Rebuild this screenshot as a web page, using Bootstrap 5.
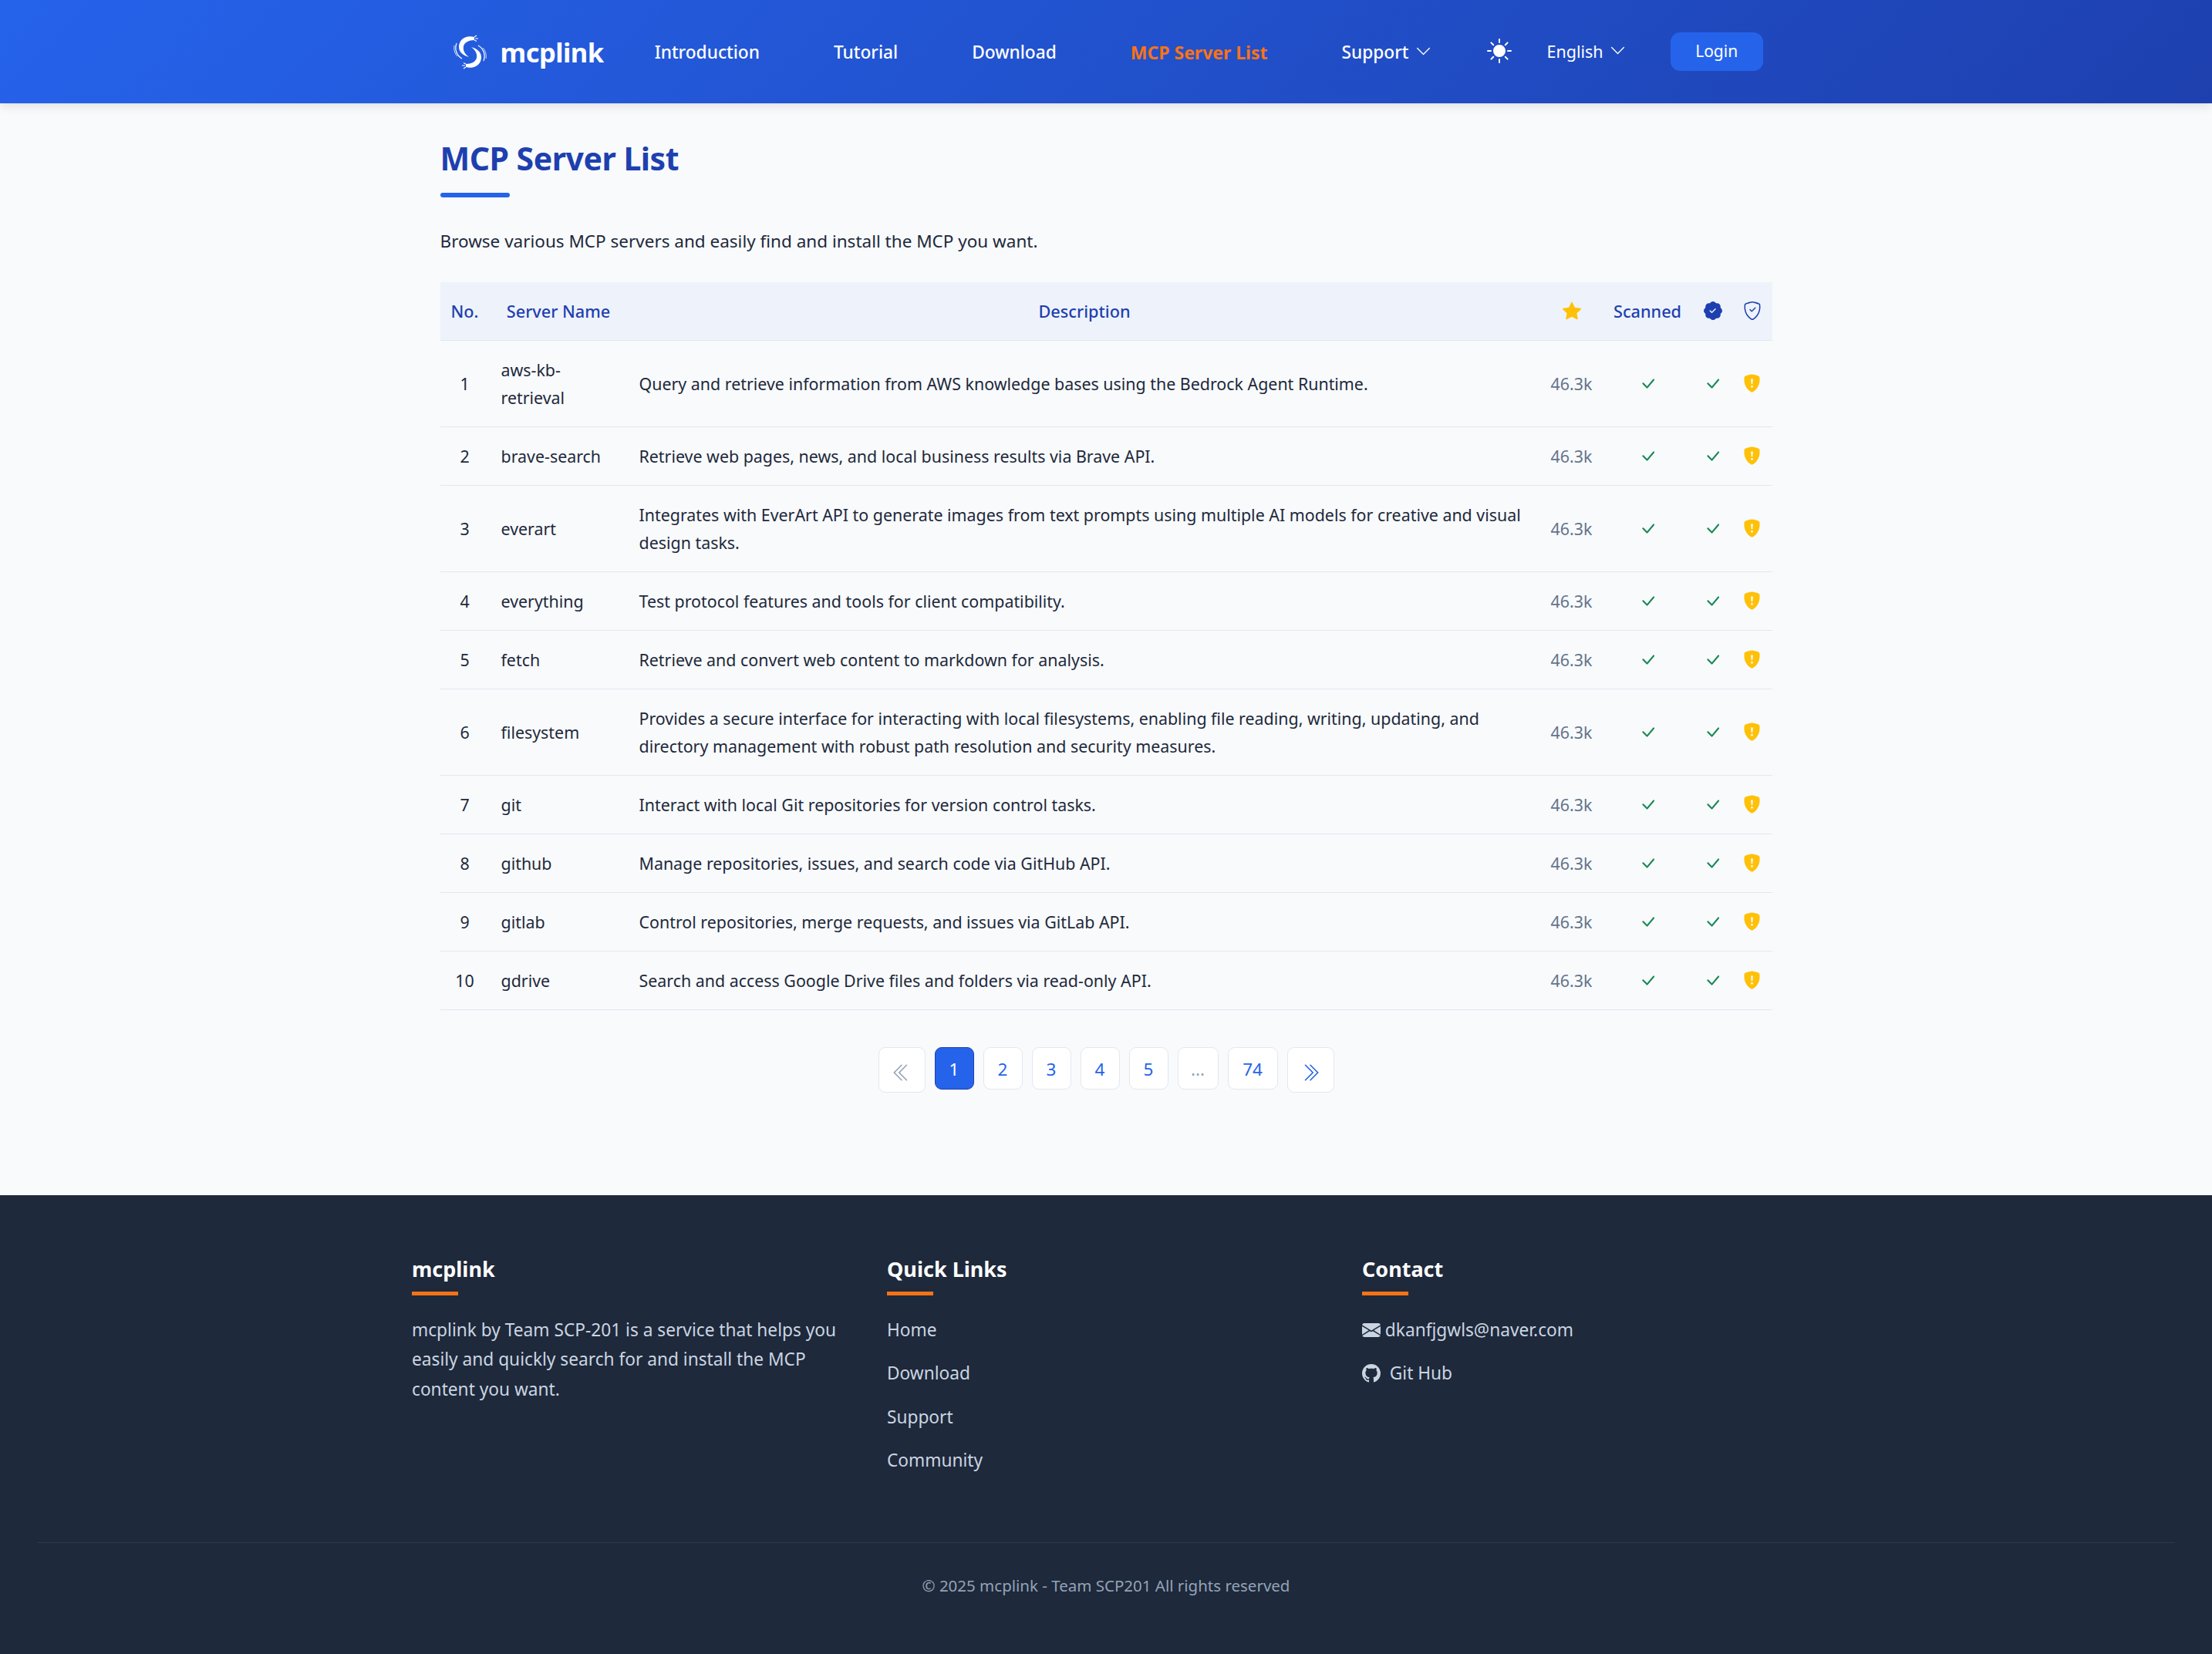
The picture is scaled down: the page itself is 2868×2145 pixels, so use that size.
<!DOCTYPE html>
<html lang="en">

<head>
    <meta charset="UTF-8" />
    <meta name="viewport" content="width=device-width, initial-scale=1.0" />
    <title>MCP Server List</title>
    <link href="https://cdn.jsdelivr.net/npm/bootstrap@5.3.2/dist/css/bootstrap.min.css" rel="stylesheet" />
    <style>
        body {
            background-color: #f8fafc;
            color: #1e293b;
            font-family: "Noto Sans", "Open Sans", sans-serif;
            font-size: 21.4px;
            line-height: 36px;
        }

        .top-bar {
            height: 134px;
            background: linear-gradient(135deg, #2563eb, #1e40af);
            box-shadow: 0 4px 12px rgba(0, 0, 0, .1);
        }

        .top-inner {
            width: 1727px;
            margin: 0 auto;
            height: 100%;
            padding-left: 17px;
        }

        .logo-mark { width: 43px; height: 47px; }
        .logo-text { color: #fff; font-size: 34.5px; font-weight: 700; margin-left: 18px; margin-right: 66px; letter-spacing: -.5px; padding-top: 2px; }
        .top-link { color: #fff; font-size: 22.7px; font-weight: 500; text-decoration: none; margin-right: 96px; white-space: nowrap; padding-top: 2px; }
        .top-link.current { color: #f97316; font-size: 23px; font-weight: 700; }
        .top-link svg, .lang-pick svg { width: 21px; height: 21px; margin-left: 8px; vertical-align: -1px; }
        .top-link.has-menu { margin-right: 72px; }
        .sun-btn { width: 32px; height: 32px; margin-right: 46px; margin-top: -2px; color: #fff; }
        .lang-pick { color: #fff; font-size: 21.5px; margin-right: 58px; margin-top: -1px; white-space: nowrap; }
        .login-btn {
            --bs-btn-bg: #2563eb;
            --bs-btn-color: #fff;
            --bs-btn-border-color: #2563eb;
            width: 120px;
            height: 50px;
            padding: 0;
            font-size: 21px;
            border-radius: 12px;
            margin-top: -1px;
        }

        .page-wrap { width: 1727px; margin: 0 auto; }

        .page-title { color: #1e40af; font-size: 41px; font-weight: 700; line-height: 60px; margin: 0; padding-top: 41px; letter-spacing: -.5px; }
        .title-bar { width: 90px; height: 6px; border-radius: 3px; background: #2563eb; margin-top: 15px; }
        .page-sub { margin: 38px 0 35px; font-size: 22.5px; line-height: 37px; }

        .server-table { table-layout: fixed; margin: 0; --bs-table-bg: transparent; --bs-table-color: #1e293b; }
        .server-table > :not(caption) > * > * { padding: 19.5px 15px; border-bottom: 1px solid #e2e8f0; vertical-align: middle; line-height: 36px; }
        .server-table thead th { background: #eef3fb; color: #1e40af; font-size: 21.7px; font-weight: 500; text-align: center; padding: 19px 0; line-height: 37px; white-space: nowrap; }
        .server-table td.num { text-align: center; padding-left: 0; padding-right: 0; }
        .server-table td.stars { text-align: center; color: #64748b; padding-left: 0; padding-right: 0; }
        .server-table td.mark-cell { text-align: center; padding-left: 0; padding-right: 0; }
        .server-table svg { vertical-align: -3px; }
        .tick { width: 23px; height: 23px; color: #198754; }
        .warn-shield { width: 23px; height: 24px; color: #ffc107; }
        .head-star { width: 24px; height: 24px; color: #ffc107; }
        .head-badge, .head-shield { width: 24px; height: 24px; color: #1e40af; }

        .pager { margin: 48px 0 133px; gap: 13px; align-items: flex-start; }
        .pager .page-link {
            display: flex;
            align-items: center;
            justify-content: center;
            height: 55px;
            min-width: 51px;
            padding: 3px 0 0;
            color: #2563eb;
            background: #fff;
            border: 1px solid #e2e8f0;
            border-radius: 9px !important;
            font-size: 22.5px;
            margin: 0;
        }
        .pager .active .page-link { background: #2563eb; border-color: #1e40af; color: #fff; }
        .pager .disabled .page-link { color: #94a3b8; }
        .pager .edge .page-link { width: 61px; height: 59px; }
        .pager .wide .page-link { width: 65px; }
        .pager .dots .page-link { width: 53px; }
        .pager svg { width: 26px; height: 26px; margin-top: 4px; }

        .site-foot { background: #1e293b; color: #cbd5e1; height: 595px; padding-top: 75px; }
        .foot-grid { width: 1848px; margin: 0 auto; --bs-gutter-x: 48px; }
        .foot-head { color: #fff; font-size: 27px; font-weight: 700; line-height: 42px; margin: 0; }
        .foot-rule { height: 5px; background: #f97316; margin: 8px 0 26px; }
        .rule-a { width: 60px; }
        .rule-b { width: 60px; }
        .foot-text { font-size: 22.7px; line-height: 38.4px; margin: 0; max-width: 570px; }
        .foot-links { list-style: none; margin: 0; padding: 0; }
        .foot-links li { height: 56.3px; line-height: 38px; font-size: 22.7px; }
        .foot-links a { color: #cbd5e1; text-decoration: none; }
        .foot-links svg { width: 24px; height: 24px; vertical-align: -4px; }
        .foot-line { border-top: 1px solid rgba(255, 255, 255, .07); margin: 0 48px; margin-top: 69px; padding-top: 36px; text-align: center; color: #94a3b8; font-size: 20.5px; line-height: 38px; }
    </style>
</head>

<body>
    <svg width="0" height="0" class="position-absolute">
        <symbol id="i-chev" viewBox="0 0 16 16"><path fill="currentColor" fill-rule="evenodd" d="M1.646 4.646a.5.5 0 0 1 .708 0L8 10.293l5.646-5.647a.5.5 0 0 1 .708.708l-6 6a.5.5 0 0 1-.708 0l-6-6a.5.5 0 0 1 0-.708z"/></symbol>
        <symbol id="i-check" viewBox="0 0 16 16"><path fill="currentColor" d="M12.736 3.97a.733.733 0 0 1 1.047 0c.286.289.29.756.01 1.05L7.88 12.01a.733.733 0 0 1-1.065.02L3.217 8.384a.757.757 0 0 1 0-1.06.733.733 0 0 1 1.047 0l3.052 3.093 5.4-6.425z"/></symbol>
        <symbol id="i-warn" viewBox="0 0 16 16"><path fill="currentColor" fill-rule="evenodd" d="M8 0c-.69 0-1.843.265-2.928.56-1.11.3-2.229.655-2.887.87a1.54 1.54 0 0 0-1.044 1.262c-.596 4.477.787 7.795 2.465 9.99a11.777 11.777 0 0 0 2.517 2.453c.386.273.744.482 1.048.625.28.132.581.24.829.24s.548-.108.829-.24a7.159 7.159 0 0 0 1.048-.625 11.775 11.775 0 0 0 2.517-2.453c1.678-2.195 3.061-5.513 2.465-9.99a1.541 1.541 0 0 0-1.044-1.263 62.467 62.467 0 0 0-2.887-.87C9.843.266 8.69 0 8 0zm-.55 8.502L7.1 4.995a.905.905 0 1 1 1.8 0l-.35 3.507a.552.552 0 0 1-1.1 0zM8.002 12a1 1 0 1 1 0-2 1 1 0 0 1 0 2z"/></symbol>
    </svg>

    <header class="top-bar">
        <nav class="top-inner d-flex align-items-center">
            <svg class="logo-mark" viewBox="0 0 43 47" fill="#fff">
                <g id="logo-arm">
                    <path d="M27 4C16 1 7 7 7 17c0 6 5 11 13 13-5-4-8-8-7-14 1-5 7-8 14-8z"/>
                    <path d="M4 12C1 20 4 28 11 32" fill="none" stroke="#fff" stroke-width="1.2"/>
                    <path d="M1 15C0 21 2 26 5 29" fill="none" stroke="#fff" stroke-width=".8"/>
                    <path d="M27 4l3-2M28 6h4M27 8l3 1.5" stroke="#fff" stroke-width="1.1"/>
                </g>
                <use href="#logo-arm" transform="rotate(180 21.5 23.5)"/>
            </svg>
            <span class="logo-text">mcplink</span>
            <a class="top-link" href="#">Introduction</a>
            <a class="top-link" href="#">Tutorial</a>
            <a class="top-link" href="#">Download</a>
            <a class="top-link current" href="#">MCP Server List</a>
            <a class="top-link has-menu" href="#">Support<svg><use href="#i-chev"/></svg></a>
            <svg class="sun-btn" viewBox="0 0 16 16" fill="currentColor"><path d="M8 12a4 4 0 1 0 0-8 4 4 0 0 0 0 8zM8 0a.5.5 0 0 1 .5.5v2a.5.5 0 0 1-1 0v-2A.5.5 0 0 1 8 0zm0 13a.5.5 0 0 1 .5.5v2a.5.5 0 0 1-1 0v-2A.5.5 0 0 1 8 13zm8-5a.5.5 0 0 1-.5.5h-2a.5.5 0 0 1 0-1h2a.5.5 0 0 1 .5.5zM3 8a.5.5 0 0 1-.5.5h-2a.5.5 0 0 1 0-1h2A.5.5 0 0 1 3 8zm10.657-5.657a.5.5 0 0 1 0 .707l-1.414 1.415a.5.5 0 1 1-.707-.708l1.414-1.414a.5.5 0 0 1 .707 0zm-9.193 9.193a.5.5 0 0 1 0 .707L3.05 13.657a.5.5 0 0 1-.707-.707l1.414-1.414a.5.5 0 0 1 .707 0zm9.193 2.121a.5.5 0 0 1-.707 0l-1.414-1.414a.5.5 0 0 1 .707-.707l1.414 1.414a.5.5 0 0 1 0 .707zM4.464 4.465a.5.5 0 0 1-.707 0L2.343 3.05a.5.5 0 1 1 .707-.707l1.414 1.414a.5.5 0 0 1 0 .708z"/></svg>
            <span class="lang-pick">English<svg><use href="#i-chev"/></svg></span>
            <button type="button" class="btn login-btn">Login</button>
        </nav>
    </header>

    <main class="page-wrap">
        <h1 class="page-title">MCP Server List</h1>
        <div class="title-bar"></div>
        <p class="page-sub">Browse various MCP servers and easily find and install the MCP you want.</p>

        <table class="table server-table">
            <colgroup>
                <col style="width: 64px" />
                <col style="width: 179px" />
                <col />
                <col style="width: 78px" />
                <col style="width: 119px" />
                <col style="width: 50px" />
                <col style="width: 52px" />
            </colgroup>
            <thead>
                <tr>
                    <th>No.</th>
                    <th>Server Name</th>
                    <th>Description</th>
                    <th><svg class="head-star" viewBox="0 0 16 16" fill="currentColor"><path d="M3.612 15.443c-.386.198-.824-.149-.746-.592l.83-4.73L.173 6.765c-.329-.314-.158-.888.283-.95l4.898-.696L7.538.792c.197-.39.73-.39.927 0l2.184 4.327 4.898.696c.441.062.612.636.282.95l-3.522 3.356.83 4.73c.078.443-.36.79-.746.592L8 13.187l-4.389 2.256z"/></svg></th>
                    <th>Scanned</th>
                    <th><svg class="head-badge" viewBox="0 0 16 16" fill="currentColor"><path d="M10.067.87a2.89 2.89 0 0 0-4.134 0l-.622.638-.89-.011a2.89 2.89 0 0 0-2.924 2.924l.01.89-.636.622a2.89 2.89 0 0 0 0 4.134l.637.622-.011.89a2.89 2.89 0 0 0 2.924 2.924l.89-.01.622.636a2.89 2.89 0 0 0 4.134 0l.622-.637.89.011a2.89 2.89 0 0 0 2.924-2.924l-.01-.89.636-.622a2.89 2.89 0 0 0 0-4.134l-.637-.622.011-.89a2.89 2.89 0 0 0-2.924-2.924l-.89.01-.622-.636zm.287 5.984-3 3a.5.5 0 0 1-.708 0l-1.5-1.5a.5.5 0 1 1 .708-.708L7 8.793l2.646-2.647a.5.5 0 0 1 .708.708z"/></svg></th>
                    <th><svg class="head-shield" viewBox="0 0 16 16" fill="currentColor"><path d="M5.338 1.59a61.44 61.44 0 0 0-2.837.856.481.481 0 0 0-.328.39c-.554 4.157.726 7.19 2.253 9.188a10.725 10.725 0 0 0 2.287 2.233c.346.244.652.42.893.533.12.057.218.095.293.118a.55.55 0 0 0 .101.025.615.615 0 0 0 .1-.025c.076-.023.174-.061.294-.118.24-.113.547-.29.893-.533a10.726 10.726 0 0 0 2.287-2.233c1.527-1.997 2.807-5.031 2.253-9.188a.48.48 0 0 0-.328-.39c-.651-.213-1.75-.56-2.837-.855C9.552 1.29 8.531 1.067 8 1.067c-.53 0-1.552.223-2.662.524zM5.072.56C6.157.265 7.31 0 8 0s1.843.265 2.928.56c1.11.3 2.229.655 2.887.87a1.54 1.54 0 0 1 1.044 1.262c.596 4.477-.787 7.795-2.465 9.99a11.775 11.775 0 0 1-2.517 2.453 7.159 7.159 0 0 1-1.048.625c-.28.132-.581.24-.829.24s-.548-.108-.829-.24a7.158 7.158 0 0 1-1.048-.625 11.777 11.777 0 0 1-2.517-2.453C1.928 10.487.545 7.169 1.141 2.692A1.54 1.54 0 0 1 2.185 1.43 62.456 62.456 0 0 1 5.072.56z"/><path d="M10.854 5.146a.5.5 0 0 1 0 .708l-3 3a.5.5 0 0 1-.708 0l-1.5-1.5a.5.5 0 1 1 .708-.708L7.5 7.793l2.646-2.647a.5.5 0 0 1 .708 0z"/></svg></th>
                </tr>
            </thead>
            <tbody id="server-rows"></tbody>
        </table>

        <ul class="pagination pager justify-content-center">
            <li class="page-item disabled edge"><a class="page-link" href="#"><svg viewBox="0 0 16 16" fill="currentColor"><path fill-rule="evenodd" d="M8.354 1.646a.5.5 0 0 1 0 .708L2.707 8l5.647 5.646a.5.5 0 0 1-.708.708l-6-6a.5.5 0 0 1 0-.708l6-6a.5.5 0 0 1 .708 0z"/><path fill-rule="evenodd" d="M12.354 1.646a.5.5 0 0 1 0 .708L6.707 8l5.647 5.646a.5.5 0 0 1-.708.708l-6-6a.5.5 0 0 1 0-.708l6-6a.5.5 0 0 1 .708 0z"/></svg></a></li>
            <li class="page-item active"><a class="page-link" href="#">1</a></li>
            <li class="page-item"><a class="page-link" href="#">2</a></li>
            <li class="page-item"><a class="page-link" href="#">3</a></li>
            <li class="page-item"><a class="page-link" href="#">4</a></li>
            <li class="page-item"><a class="page-link" href="#">5</a></li>
            <li class="page-item disabled dots"><a class="page-link" href="#">...</a></li>
            <li class="page-item wide"><a class="page-link" href="#">74</a></li>
            <li class="page-item edge"><a class="page-link" href="#"><svg viewBox="0 0 16 16" fill="currentColor"><path fill-rule="evenodd" d="M3.646 1.646a.5.5 0 0 1 .708 0l6 6a.5.5 0 0 1 0 .708l-6 6a.5.5 0 0 1-.708-.708L9.293 8 3.646 2.354a.5.5 0 0 1 0-.708z"/><path fill-rule="evenodd" d="M7.646 1.646a.5.5 0 0 1 .708 0l6 6a.5.5 0 0 1 0 .708l-6 6a.5.5 0 0 1-.708-.708L13.293 8 7.646 2.354a.5.5 0 0 1 0-.708z"/></svg></a></li>
        </ul>
    </main>

    <footer class="site-foot">
        <div class="row foot-grid">
            <div class="col-4">
                <h5 class="foot-head">mcplink</h5>
                <div class="foot-rule rule-a"></div>
                <p class="foot-text">mcplink by Team SCP-201 is a service that helps you easily and quickly search for and install the MCP content you want.</p>
            </div>
            <div class="col-4">
                <h5 class="foot-head">Quick Links</h5>
                <div class="foot-rule rule-b"></div>
                <ul class="foot-links">
                    <li><a href="#">Home</a></li>
                    <li><a href="#">Download</a></li>
                    <li><a href="#">Support</a></li>
                    <li><a href="#">Community</a></li>
                </ul>
            </div>
            <div class="col-4">
                <h5 class="foot-head">Contact</h5>
                <div class="foot-rule rule-b"></div>
                <ul class="foot-links">
                    <li><a href="#"><svg viewBox="0 0 16 16" fill="currentColor"><path d="M.05 3.555A2 2 0 0 1 2 2h12a2 2 0 0 1 1.95 1.555L8 8.414.05 3.555zM0 4.697v7.104l5.803-3.558L0 4.697zM6.761 8.83l-6.57 4.027A2 2 0 0 0 2 14h12a2 2 0 0 0 1.808-1.144l-6.57-4.027L8 9.586l-1.239-.757zm3.436-.586L16 11.801V4.697l-5.803 3.546z"/></svg> dkanfjgwls@naver.com</a></li>
                    <li><a href="#"><svg viewBox="0 0 16 16" fill="currentColor"><path d="M8 0C3.58 0 0 3.58 0 8c0 3.54 2.29 6.53 5.47 7.59.4.07.55-.17.55-.38 0-.19-.01-.82-.01-1.49-2.01.37-2.53-.49-2.69-.94-.09-.23-.48-.94-.82-1.13-.28-.15-.68-.52-.01-.53.63-.01 1.08.58 1.23.82.72 1.21 1.87.87 2.33.66.07-.52.28-.87.51-1.07-1.78-.2-3.64-.89-3.64-3.95 0-.87.31-1.59.82-2.15-.08-.2-.36-1.02.08-2.12 0 0 .67-.21 2.2.82.64-.18 1.32-.27 2-.27.68 0 1.36.09 2 .27 1.53-1.04 2.2-.82 2.2-.82.44 1.1.16 1.92.08 2.12.51.56.82 1.27.82 2.15 0 3.07-1.87 3.75-3.65 3.95.29.25.54.73.54 1.48 0 1.07-.01 1.93-.01 2.2 0 .21.15.46.55.38A8.012 8.012 0 0 0 16 8c0-4.42-3.58-8-8-8z"/></svg>&nbsp; Git Hub</a></li>
                </ul>
            </div>
        </div>
        <div class="foot-line">© 2025 mcplink - Team SCP201 All rights reserved</div>
    </footer>

    <script src="https://cdn.jsdelivr.net/npm/bootstrap@5.3.2/dist/js/bootstrap.bundle.min.js"></script>
    <script>
        const servers = [
            ['aws-kb-retrieval', 'Query and retrieve information from AWS knowledge bases using the Bedrock Agent Runtime.'],
            ['brave-search', 'Retrieve web pages, news, and local business results via Brave API.'],
            ['everart', 'Integrates with EverArt API to generate images from text prompts using multiple AI models for creative and visual design tasks.'],
            ['everything', 'Test protocol features and tools for client compatibility.'],
            ['fetch', 'Retrieve and convert web content to markdown for analysis.'],
            ['filesystem', 'Provides a secure interface for interacting with local filesystems, enabling file reading, writing, updating, and directory management with robust path resolution and security measures.'],
            ['git', 'Interact with local Git repositories for version control tasks.'],
            ['github', 'Manage repositories, issues, and search code via GitHub API.'],
            ['gitlab', 'Control repositories, merge requests, and issues via GitLab API.'],
            ['gdrive', 'Search and access Google Drive files and folders via read-only API.']
        ];

        const tick = '<svg class="tick"><use href="#i-check"/></svg>';
        const warn = '<svg class="warn-shield"><use href="#i-warn"/></svg>';

        document.getElementById('server-rows').innerHTML = servers.map((s, i) => `
            <tr>
                <td class="num">${i + 1}</td>
                <td>${s[0]}</td>
                <td>${s[1]}</td>
                <td class="stars">46.3k</td>
                <td class="mark-cell">${tick}</td>
                <td class="mark-cell">${tick}</td>
                <td class="mark-cell">${warn}</td>
            </tr>`).join('');
    </script>
</body>

</html>
